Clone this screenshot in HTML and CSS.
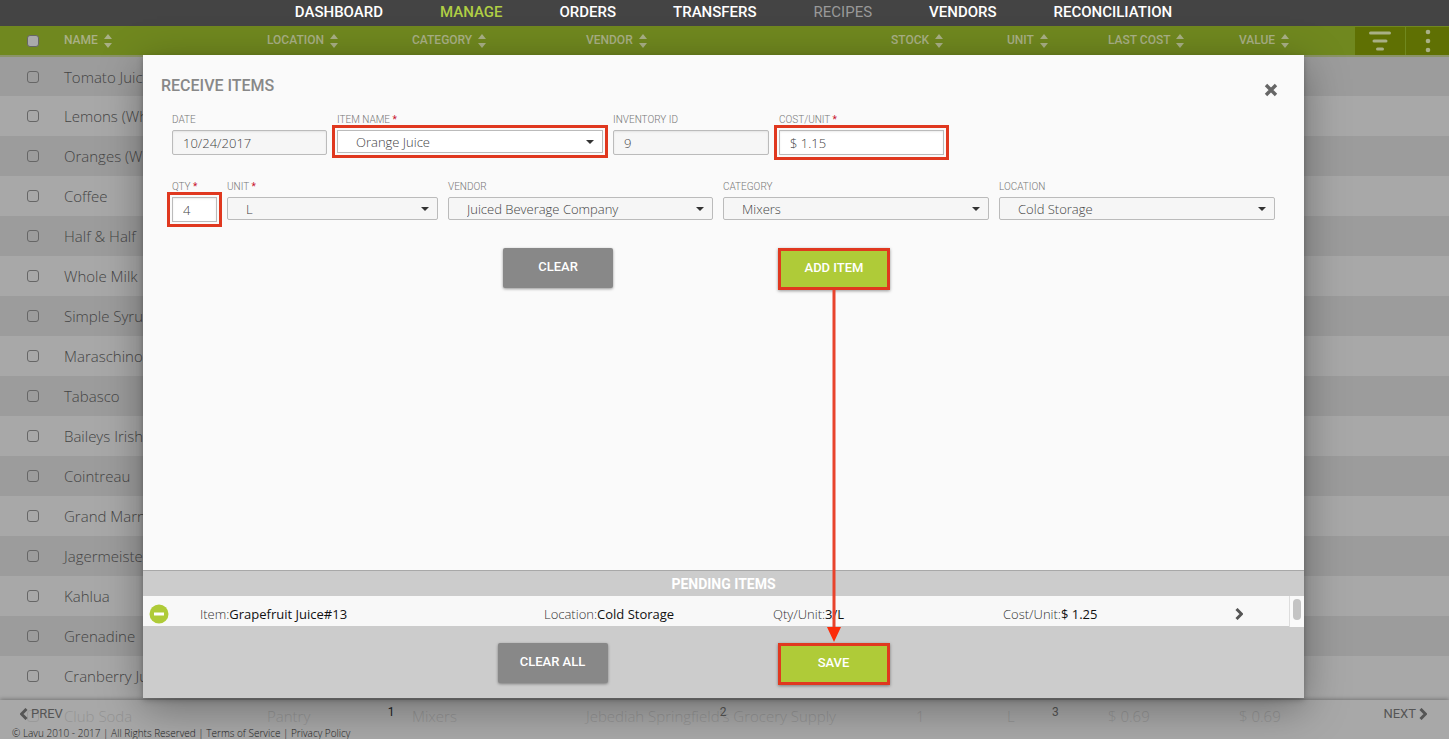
FILE: index.html
```html
<!DOCTYPE html>
<html lang="en">
<head>
  <meta charset="UTF-8" />
  <title>Receive Items</title>
  <link rel="stylesheet" href="styles.css">
</head>
<body>
  <svg class="defs" width="0" height="0" aria-hidden="true">
    <symbol id="sort" viewBox="0 0 8 14"><path d="M4 0L8 5H0zM0 9h8l-4 5z"/></symbol>
    <symbol id="chevron" viewBox="0 0 8 12"><path d="M1.500 1l5 5-5 5" fill="none" stroke="currentColor" stroke-width="3"/></symbol>
  </svg>

  <nav class="main-nav">
    <a href="#">DASHBOARD</a>
    <a href="#" class="active">MANAGE</a>
    <a href="#">ORDERS</a>
    <a href="#">TRANSFERS</a>
    <a href="#" class="disabled">RECIPES</a>
    <a href="#">VENDORS</a>
    <a href="#">RECONCILIATION</a>
  </nav>

  <table class="inventory">
    <colgroup>
      <col class="c-check"><col class="c-name"><col class="c-location"><col class="c-category"><col class="c-vendor">
      <col class="c-stock"><col class="c-unit"><col class="c-cost"><col class="c-value"><col class="c-actions">
    </colgroup>
    <thead>
      <tr>
        <th><input type="checkbox" aria-label="Select all"></th>
        <th>NAME <svg class="sort"><use href="#sort"/></svg></th>
        <th>LOCATION <svg class="sort"><use href="#sort"/></svg></th>
        <th>CATEGORY <svg class="sort"><use href="#sort"/></svg></th>
        <th>VENDOR <svg class="sort"><use href="#sort"/></svg></th>
        <th>STOCK <svg class="sort"><use href="#sort"/></svg></th>
        <th>UNIT <svg class="sort"><use href="#sort"/></svg></th>
        <th>LAST COST <svg class="sort"><use href="#sort"/></svg></th>
        <th>VALUE <svg class="sort"><use href="#sort"/></svg></th>
        <th class="actions">
          <div class="action-buttons">
            <button type="button" class="filter" aria-label="Filter">
              <svg width="22" height="20" viewBox="0 0 22 20"><path d="M1.500 2h19M5 10h12M8.500 18h5" stroke="currentColor" stroke-width="3" stroke-linecap="round"/></svg>
            </button>
            <button type="button" class="more" aria-label="More">
              <svg width="6" height="24" viewBox="0 0 6 24" fill="currentColor"><circle cx="3" cy="3" r="2.300"/><circle cx="3" cy="12" r="2.300"/><circle cx="3" cy="21" r="2.300"/></svg>
            </button>
          </div>
        </th>
      </tr>
    </thead>
    <tbody>
      <tr><td><input type="checkbox" id="i1"></td><td colspan="9"><label for="i1">Tomato Juice</label></td></tr>
      <tr><td><input type="checkbox" id="i2"></td><td colspan="9"><label for="i2">Lemons (Whole)</label></td></tr>
      <tr><td><input type="checkbox" id="i3"></td><td colspan="9"><label for="i3">Oranges (Whole)</label></td></tr>
      <tr><td><input type="checkbox" id="i4"></td><td colspan="9"><label for="i4">Coffee</label></td></tr>
      <tr><td><input type="checkbox" id="i5"></td><td colspan="9"><label for="i5">Half &amp; Half</label></td></tr>
      <tr><td><input type="checkbox" id="i6"></td><td colspan="9"><label for="i6">Whole Milk</label></td></tr>
      <tr><td><input type="checkbox" id="i7"></td><td colspan="9"><label for="i7">Simple Syrup</label></td></tr>
      <tr><td><input type="checkbox" id="i8"></td><td colspan="9"><label for="i8">Maraschino</label></td></tr>
      <tr><td><input type="checkbox" id="i9"></td><td colspan="9"><label for="i9">Tabasco</label></td></tr>
      <tr><td><input type="checkbox" id="i10"></td><td colspan="9"><label for="i10">Baileys Irish</label></td></tr>
      <tr><td><input type="checkbox" id="i11"></td><td colspan="9"><label for="i11">Cointreau</label></td></tr>
      <tr><td><input type="checkbox" id="i12"></td><td colspan="9"><label for="i12">Grand Marnier</label></td></tr>
      <tr><td><input type="checkbox" id="i13"></td><td colspan="9"><label for="i13">Jagermeister</label></td></tr>
      <tr><td><input type="checkbox" id="i14"></td><td colspan="9"><label for="i14">Kahlua</label></td></tr>
      <tr><td><input type="checkbox" id="i15"></td><td colspan="9"><label for="i15">Grenadine</label></td></tr>
      <tr><td><input type="checkbox" id="i16"></td><td colspan="9"><label for="i16">Cranberry Juice</label></td></tr>
      <tr>
        <td><input type="checkbox" id="i17"></td><td><label for="i17">Club Soda</label></td><td>Pantry</td><td>Mixers</td>
        <td>Jebediah Springfield's Grocery Supply</td><td class="stock">1</td><td>L</td><td>$ 0.69</td><td>$ 0.69</td><td></td>
      </tr>
    </tbody>
  </table>

  <footer class="page-footer">
    <div class="pager">
      <a href="#" class="prev"><svg class="chevron left"><use href="#chevron"/></svg>PREV</a>
      <div class="pages">
        <a href="#" class="current">1</a>
        <a href="#">2</a>
        <a href="#">3</a>
      </div>
      <a href="#" class="next">NEXT<svg class="chevron"><use href="#chevron"/></svg></a>
    </div>
    <div class="legal">© Lavu 2010 - 2017 | All Rights Reserved | <a href="#">Terms of Service</a> | <a href="#">Privacy Policy</a></div>
  </footer>

  <div class="overlay">
    <div class="modal" role="dialog" aria-labelledby="modalTitle">
      <div class="modal-header">
        <h1 id="modalTitle">RECEIVE ITEMS</h1>
        <button type="button" class="close" aria-label="Close">
          <svg width="14" height="14" viewBox="0 0 14 14"><path d="M2 2l10 10M12 2L2 12" stroke="currentColor" stroke-width="3.400"/></svg>
        </button>
      </div>

      <form class="modal-body">
        <div class="fields first">
          <div class="field">
            <label for="date">DATE</label>
            <input type="text" id="date" value="10/24/2017">
          </div>
          <div class="field">
            <label for="item">ITEM NAME <b>*</b></label>
            <select id="item" class="white marked"><option>Orange Juice</option></select>
          </div>
          <div class="field">
            <label for="invId">INVENTORY ID</label>
            <input type="text" id="invId" value="9">
          </div>
          <div class="field">
            <label for="cost">COST/UNIT <b>*</b></label>
            <input type="text" id="cost" class="white marked" value="$ 1.15">
          </div>
        </div>
        <div class="fields second">
          <div class="field">
            <label for="qty">QTY <b>*</b></label>
            <input type="text" id="qty" class="white marked" value="4">
          </div>
          <div class="field">
            <label for="unit">UNIT <b>*</b></label>
            <select id="unit"><option>L</option></select>
          </div>
          <div class="field">
            <label for="vendor">VENDOR</label>
            <select id="vendor"><option>Juiced Beverage Company</option></select>
          </div>
          <div class="field">
            <label for="category">CATEGORY</label>
            <select id="category"><option>Mixers</option></select>
          </div>
          <div class="field">
            <label for="location">LOCATION</label>
            <select id="location"><option>Cold Storage</option></select>
          </div>
        </div>
        <div class="buttons">
          <button type="button" class="btn">CLEAR</button>
          <div class="step">
            <button type="button" class="btn green">ADD ITEM</button>
            <svg class="arrow" width="16" height="352" viewBox="0 0 16 352"><path d="M8 0v340" stroke="#e8432c" stroke-width="3"/><path d="M1 337h14L8 352z" fill="#fb2c0a"/></svg>
          </div>
        </div>
      </form>

      <div class="pending">
        <h2>PENDING ITEMS</h2>
        <div class="pending-list">
          <div class="pending-row">
            <button type="button" class="remove" aria-label="Remove">
              <svg width="20" height="20" viewBox="0 0 20 20"><circle cx="10" cy="10" r="9.500" fill="#afcb38"/><path d="M5 10h10" stroke="#fff" stroke-width="3"/></svg>
            </button>
            <span>Item:<b>Grapefruit Juice#13</b></span>
            <span>Location:<b>Cold Storage</b></span>
            <span>Qty/Unit:<b>3/L</b></span>
            <span>Cost/Unit:<b>$ 1.25</b></span>
            <button type="button" class="expand" aria-label="Details"><svg class="chevron"><use href="#chevron"/></svg></button>
          </div>
          <div class="scrollbar"><div class="thumb"></div></div>
        </div>
        <div class="buttons">
          <button type="button" class="btn">CLEAR ALL</button>
          <button type="button" class="btn green">SAVE</button>
        </div>
      </div>
    </div>
  </div>
</body>
</html>
```
FILE: styles.css
```css
* { box-sizing: border-box; }

body {
  margin: 0;
  min-height: 100vh;
  position: relative;
  overflow: hidden;
  background: #a8a8a8;
  font-family: "Open Sans", sans-serif;
  font-weight: 300;
  font-size: 15px;
  color: #333;
}

a { color: inherit; text-decoration: none; }

button {
  border: none;
  padding: 0;
  background: none;
  font-family: Roboto, sans-serif;
  cursor: pointer;
}

svg { display: block; }

.defs { position: absolute; }

.main-nav {
  display: flex;
  justify-content: center;
  gap: 57px;
  height: 26px;
  padding-left: 18px;
  background: #444;
  color: #fff;
  font-family: Roboto, sans-serif;
  font-size: 15px;
  font-weight: 500;
  line-height: 24px;
}

.main-nav .active { color: #b0ce44; }
.main-nav .disabled { color: #999; font-weight: 400; }

/* inventory list */
.inventory {
  width: 100%;
  table-layout: fixed;
  border-collapse: collapse;
}

.c-check { width: 64px; }
.c-name { width: 203px; }
.c-location { width: 145px; }
.c-category { width: 174px; }
.c-stock { width: 116px; }
.c-unit { width: 101px; }
.c-cost { width: 131px; }
.c-value { width: 116px; }
.c-actions { width: 94px; }

.inventory th, .inventory td {
  padding: 0;
  text-align: left;
  white-space: nowrap;
}

.inventory th {
  height: 30px;
  background: #70881f;
  border-bottom: 2px solid #8b9468;
  color: #a9b086;
  font-family: Roboto, sans-serif;
  font-size: 12px;
  font-weight: 500;
}

.inventory td {
  height: 40px;
  color: #444;
}

.inventory tbody tr:nth-child(odd) { background: #9c9c9c; }
.inventory tbody tr:last-child { background: #a8a8a8; }

.inventory input {
  display: block;
  appearance: none;
  width: 12px;
  height: 12px;
  margin: 0 0 0 27px;
  border: 1px solid #666;
  border-radius: 3px;
}

.inventory th input { background: #aaa; }

.inventory .stock { padding-left: 25px; }

.sort {
  display: inline-block;
  width: 8px;
  height: 14px;
  margin-left: 3px;
  vertical-align: middle;
  fill: #a9b086;
}

.action-buttons {
  display: flex;
  height: 28px;
  background: #5f7003;
}

.action-buttons button {
  display: flex;
  align-items: center;
  justify-content: center;
  color: #a9b086;
}

.action-buttons .filter { width: 50px; }

.action-buttons .more {
  flex: 1;
  border-left: 1px solid #70881f;
}

/* pager and legal line */
.page-footer {
  position: absolute;
  left: 0;
  right: 0;
  bottom: 0;
  height: 39px;
  background: rgba(168, 168, 168, 0.8);
  box-shadow: 0 -1px 4px rgba(0, 0, 0, 0.3);
}

.pager {
  display: flex;
  justify-content: space-between;
  height: 27px;
  padding: 0 22px 0 20px;
  font-family: Roboto, sans-serif;
  font-size: 13px;
  font-weight: 400;
  color: #555;
}

.prev, .next {
  display: flex;
  align-items: center;
  gap: 3px;
}

.pages {
  display: flex;
  justify-content: space-between;
  width: 48%;
  max-width: 671px;
  font-size: 12px;
  line-height: 24px;
}

.pages .current { color: #222; }

.chevron {
  width: 8px;
  height: 12px;
}

.chevron.left { transform: rotate(180deg); }

.legal {
  padding-left: 12px;
  font-size: 10px;
  font-weight: 300;
  line-height: 12px;
  color: #222;
}

/* dialog */
.overlay {
  position: absolute;
  inset: 0;
  padding: 55px 145px 41px 143px;
}

.modal {
  display: flex;
  flex-direction: column;
  height: 100%;
  background: #fafafa;
  box-shadow: 0 10px 40px rgba(0, 0, 0, 0.35), 0 2px 6px rgba(0, 0, 0, 0.25);
}

.modal-header {
  display: flex;
  justify-content: space-between;
  align-items: center;
  padding: 20px 26px 0 18px;
}

.modal-header h1 {
  margin: 0;
  color: #888;
  font-family: Roboto, sans-serif;
  font-size: 16px;
  font-weight: 500;
  line-height: 20px;
}

.close {
  margin-top: 8px;
  color: #666;
}

.modal-body {
  flex: 1;
  padding: 14px 29px 0;
}

.fields {
  display: grid;
  gap: 10px;
}

.fields.first { grid-template-columns: 155fr 266fr 156fr 165fr 321fr; }
.fields.second { grid-template-columns: 45fr 211fr 265fr 266fr 276fr; }

.field {
  height: 67px;
}

.field label {
  display: block;
  height: 19px;
  color: #777;
  font-family: Roboto, sans-serif;
  font-size: 10px;
  font-weight: 300;
  line-height: 18px;
  white-space: nowrap;
}

.field label b { color: #c8102e; }

.field input, .field select {
  display: block;
  width: 100%;
  height: 25px;
  padding: 0 10px;
  border: 1px solid #bbb;
  border-radius: 2px;
  background-color: #f6f6f6;
  box-shadow: inset 0 1px 2px rgba(0, 0, 0, 0.08);
  color: #444;
  font-family: "Open Sans", sans-serif;
  font-size: 13px;
  font-weight: 300;
}

.field select {
  appearance: none;
  height: 23px;
  padding: 0 18px;
  box-shadow: none;
  background-image: url("data:image/svg+xml,%3Csvg xmlns='http://www.w3.org/2000/svg' width='8' height='4'%3E%3Cpath d='M0 0h8L4 4z' fill='%23333'/%3E%3C/svg%3E");
  background-repeat: no-repeat;
  background-position: right 8px center;
}

.field .white { background-color: #fff; }

.field .marked {
  border-radius: 0;
  outline: 3px solid #e0381f;
  outline-offset: 2px;
}

.buttons {
  display: flex;
  justify-content: center;
  gap: 165px;
  padding: 3px 54px 0 0;
}

.btn {
  width: 110px;
  height: 40px;
  padding-bottom: 4px;
  border-radius: 2px;
  background: #888;
  box-shadow: 0 1px 3px rgba(0, 0, 0, 0.4);
  color: #fff;
  font-size: 13px;
  font-weight: 500;
}

.btn.green {
  width: 112px;
  height: 42px;
  border: 3px solid #e0381f;
  border-radius: 0;
  background: #afcb38;
}

.step { position: relative; }

.arrow {
  position: absolute;
  top: 100%;
  left: 50%;
  margin-left: -8px;
  z-index: 1;
}

/* pending list */
.pending {
  height: 128px;
  border-top: 1px solid #a8a8a8;
  background: #ccc;
}

.pending h2 {
  height: 25px;
  margin: 0;
  color: #fff;
  font-family: Roboto, sans-serif;
  font-size: 14px;
  font-weight: 700;
  line-height: 26px;
  text-align: center;
}

.pending-list {
  display: flex;
  height: 31px;
}

.pending-row {
  flex: 1;
  display: grid;
  grid-template-columns: 51fr 344fr 229fr 230fr 232fr 54fr;
  align-items: center;
  height: 30px;
  padding: 6px 0 0 6px;
  background: #f8f8f8;
  font-size: 13px;
}

.pending-row b { color: #111; font-weight: 400; }

.expand { color: #555; }

.scrollbar {
  width: 15px;
  padding: 3px;
  border-left: 1px solid #ddd;
  background: #fafafa;
}

.thumb {
  width: 8px;
  height: 21px;
  border-radius: 4px;
  background: #c4c4c4;
}

.pending .buttons {
  gap: 170px;
  padding: 16px 60px 0 0;
}
```
